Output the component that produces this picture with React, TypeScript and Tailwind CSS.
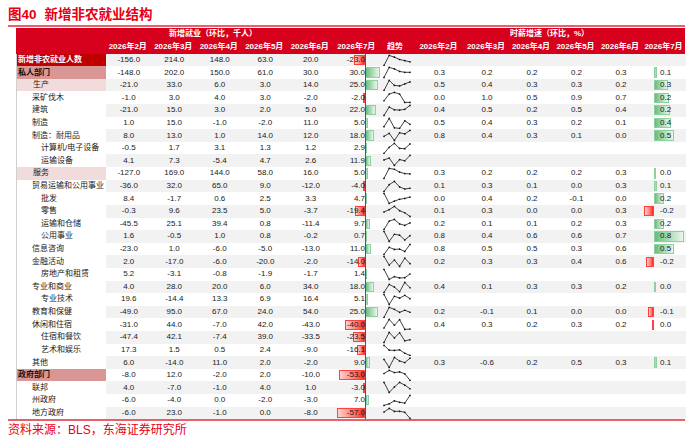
import React from "react";

type Row = {
  label: string;
  lvl: 0 | 1 | 2;
  kind?: "total" | "sector" | "sub";
  emp: number[];
  wage?: number[];
  wbar?: number;
};

const rows: Row[] = [
  { label: "新增非农就业人数", lvl: 0, kind: "total", emp: [-156, 214, 148, 63, 20, -23] },
  { label: "私人部门", lvl: 0, kind: "sector", emp: [-148, 202, 150, 61, 30, 30], wage: [0.3, 0.2, 0.2, 0.2, 0.3, 0.1], wbar: 2.5 },
  { label: "生产", lvl: 1, kind: "sub", emp: [-21, 33, 6, 3, 14, 25], wage: [0.5, 0.4, 0.3, 0.3, 0.2, 0.3], wbar: 14 },
  { label: "采矿伐木", lvl: 1, emp: [-1, 3, 4, 3, -2, -2], wage: [0.0, 1.0, 0.5, 0.9, 0.7, 0.2], wbar: 15 },
  { label: "建筑", lvl: 1, emp: [-21, 15, 3, 2, 5, 22], wage: [0.4, 0.5, 0.2, 0.5, 0.4, 0.2], wbar: 16 },
  { label: "制造", lvl: 1, emp: [1, 15, -1, -2, 11, 5], wage: [0.5, 0.4, 0.3, 0.2, 0.1, 0.4], wbar: 17 },
  { label: "制造：耐用品", lvl: 1, emp: [8, 13, 1, 14, 12, 18], wage: [0.8, 0.4, 0.3, 0.1, 0.0, 0.5], wbar: 20 },
  { label: "计算机/电子设备", lvl: 2, emp: [-0.5, 1.7, 3.1, 1.3, 1.2, 2.9] },
  { label: "运输设备", lvl: 2, emp: [4.1, 7.3, -5.4, 4.7, 2.6, 11.9] },
  { label: "服务", lvl: 1, kind: "sub", emp: [-127, 169, 144, 58, 16, 5], wage: [0.3, 0.2, 0.2, 0.2, 0.3, 0.0], wbar: 1 },
  { label: "贸易运输和公用事业", lvl: 1, emp: [-36, 32, 65, 9, -12, -4], wage: [0.1, 0.3, 0.1, 0.0, 0.3, 0.1], wbar: 3 },
  { label: "批发", lvl: 2, emp: [8.4, -1.7, 0.6, 2.5, 3.3, 4.7], wage: [0.0, 0.4, 0.2, -0.1, 0.0, 0.2], wbar: 10 },
  { label: "零售", lvl: 2, emp: [-0.3, 9.6, 23.5, 5.0, -3.7, -19.4], wage: [0.1, 0.3, 0.0, 0.0, 0.3, -0.2], wbar: -10 },
  { label: "运输和仓储", lvl: 2, emp: [-45.5, 25.1, 39.4, 0.8, -11.4, 9.7], wage: [0.2, 0.1, 0.1, 0.2, 0.3, 0.2], wbar: 10 },
  { label: "公用事业", lvl: 2, emp: [1.6, -0.5, 1.0, 0.8, -0.2, 0.7], wage: [0.8, 0.4, 0.6, 0.6, 0.7, 0.8], wbar: 30 },
  { label: "信息咨询", lvl: 1, emp: [-23, 1, -6, -5, -13, 11], wage: [0.8, 0.5, 0.5, 0.3, 0.6, 0.5], wbar: 20 },
  { label: "金融活动", lvl: 1, emp: [2, -17, -6, -20, -2, -14], wage: [0.2, 0.3, 0.3, 0.4, 0.6, -0.2], wbar: -8 },
  { label: "房地产和租赁", lvl: 2, emp: [5.2, -3.1, -0.8, -1.9, -1.7, 1.4] },
  { label: "专业和商业", lvl: 1, emp: [4, 28, 20, 6, 34, 18], wage: [0.4, 0.1, 0.3, 0.3, 0.2, 0.0], wbar: 1 },
  { label: "专业技术", lvl: 2, emp: [19.6, -14.4, 13.3, 6.9, 16.4, 5.1] },
  { label: "教育和保健", lvl: 1, emp: [-49, 95, 67, 24, 54, 25], wage: [0.2, -0.1, 0.1, 0.0, 0.0, -0.1], wbar: -6 },
  { label: "休闲和住宿", lvl: 1, emp: [-31, 44, -7, 42, -43, -40], wage: [0.4, 0.3, 0.2, 0.3, 0.2, 0.0], wbar: -2 },
  { label: "住宿和餐饮", lvl: 2, emp: [-47.4, 42.1, -7.4, 39.0, -33.5, -23.5] },
  { label: "艺术和娱乐", lvl: 2, emp: [17.3, 1.5, 0.5, 2.4, -9.0, -16.1] },
  { label: "其他", lvl: 1, emp: [6, -14, 11, 2, -2, 9], wage: [0.3, -0.6, 0.2, 0.5, 0.3, 0.1], wbar: 3 },
  { label: "政府部门", lvl: 0, kind: "sector", emp: [-8, 12, -2, 2, -10, -53] },
  { label: "联邦", lvl: 1, emp: [4, -7, -1, 4, 1, -3] },
  { label: "州政府", lvl: 1, emp: [-6, -4, 0, -2, -3, 7] },
  { label: "地方政府", lvl: 1, emp: [-6, 23, -1, 0, -8, -57] },
];

const GRID =
  "grid grid-cols-[89px_45.5px_45.5px_45.5px_45.5px_45.5px_47.5px_34px_49px_46px_44px_45px_44px_43px]";

const months = ["2026年2月", "2026年3月", "2026年4月", "2026年5月", "2026年6月", "2026年7月"];

const fmt = (v: number) => v.toFixed(1);

function Spark({ vals }: { vals: number[] }) {
  const min = Math.min(...vals);
  const max = Math.max(...vals);
  const range = max - min || 1;
  const pts = vals.map((v, i) => {
    const x = 3 + i * 5.2;
    const y = 1.4 + (1 - (v - min) / range) * 10;
    return [x, y];
  });
  return (
    <svg width="34" height="12.62" className="overflow-visible block">
      <polyline
        points={pts.map((p) => p.join(",")).join(" ")}
        fill="none"
        stroke="#111"
        strokeWidth="0.8"
        strokeLinejoin="round"
      />
      {pts.map((p, i) => (
        <circle key={i} cx={p[0]} cy={p[1]} r="0.85" fill="#111" />
      ))}
    </svg>
  );
}

function LabelCell({ r }: { r: Row }) {
  let cls = "bg-white text-[#1a1a1a]";
  if (r.kind === "total") cls = "bg-[#c00000] text-white font-bold";
  else if (r.kind === "sector") cls = "bg-[#d99694] text-[#111] font-bold";
  else if (r.kind === "sub") cls = "bg-[#f2dcdb] text-[#1a1a1a]";
  const pad = r.lvl === 0 ? "pl-[1px]" : r.lvl === 1 ? (r.kind === "sub" ? "pl-[16px]" : "pl-[15px]") : "pl-[24px]";
  return (
    <div className={`${cls} ${pad} flex items-center whitespace-nowrap overflow-hidden`}>
      {r.label}
    </div>
  );
}

export default function App() {
  return (
    <div
      className="w-[700px] h-[444px] bg-white px-[8px] overflow-hidden"
      style={{ fontFamily: '"Liberation Sans", "Noto Sans CJK SC", sans-serif' }}
    >
      {/* Title */}
      <div className="h-[25px] pt-[8px] leading-[14px] text-[13.5px] font-bold text-[#e60012] flex items-start">
        <span>图40</span>
        <span className="ml-[8px]">新增非农就业结构</span>
      </div>
      <div className="w-[677px] h-[1.5px] bg-[#e8606a]" />

      {/* Table */}
      <div className="mt-[1.5px] ml-[8px] w-[669px] text-[8px]">
        {/* Header row 1 */}
        <div className={`${GRID} h-[12.8px] bg-[#d7001d] text-white font-bold`}>
          <div />
          <div className="col-span-6 flex items-center justify-center pr-[59px] whitespace-nowrap">
            新增就业（环比，千人）
          </div>
          <div />
          <div className="col-span-6 flex items-center justify-center whitespace-nowrap">
            时薪增速（环比，%）
          </div>
        </div>
        {/* Header row 2 */}
        <div className={`${GRID} h-[12.8px] bg-[#d7001d] text-white font-bold`}>
          <div />
          {months.map((m) => (
            <div key={"e" + m} className="flex items-center justify-center whitespace-nowrap">
              {m}
            </div>
          ))}
          <div className="flex items-center justify-center pr-[4px]">趋势</div>
          {months.map((m) => (
            <div key={"w" + m} className="flex items-center justify-center whitespace-nowrap">
              {m}
            </div>
          ))}
        </div>

        {/* Body */}
        <div className="border-l border-[#cfcfcf]">
          {rows.map((r, idx) => {
            const stripe = idx % 2 === 0 ? "bg-[#f2f2f2]" : "bg-white";
            const jul = r.emp[5];
            const eLen = Math.max(1, Math.abs(jul) * 0.5);
            return (
              <div key={r.label} className={`${GRID} h-[12.62px] text-[#1a1a1a]`}>
                <LabelCell r={r} />
                {r.emp.slice(0, 5).map((v, i) => (
                  <div key={i} className={`${stripe} flex items-center justify-center`}>
                    {fmt(v)}
                  </div>
                ))}
                {/* July with data bar */}
                <div className={`${stripe} relative flex items-center justify-end pr-[16px]`}>
                  {jul < 0 ? (
                    <div
                      className="absolute top-[1.2px] bottom-[1.2px] right-[16px] bg-linear-to-r from-[#ffd0d0] to-[#ff1010] border border-[#ff4040]"
                      style={{ width: `${eLen}px` }}
                    />
                  ) : (
                    <div
                      className="absolute top-[1.2px] bottom-[1.2px] left-[31.5px] bg-linear-to-r from-[#63be7b] to-[#eaf6ee] border border-[#8fd0a0]"
                      style={{ width: `${eLen}px` }}
                    />
                  )}
                  <div className="absolute top-0 bottom-0 left-[31px] w-[0.8px] bg-[#555]" />
                  <span className="relative">{fmt(jul)}</span>
                </div>
                {/* Trend */}
                <div className={`${stripe} flex items-center`}>
                  <Spark vals={r.emp} />
                </div>
                {/* Wage */}
                {r.wage ? (
                  <>
                    {r.wage.slice(0, 5).map((v, i) => (
                      <div key={"w" + i} className={`${stripe} flex items-center justify-center`}>
                        {fmt(v)}
                      </div>
                    ))}
                    <div className={`${stripe} relative flex items-center pl-[17px]`}>
                      {(r.wbar ?? 0) < 0 ? (
                        <div
                          className="absolute top-[1.2px] bottom-[1.2px] right-[32px] bg-linear-to-r from-[#ffd0d0] to-[#ff1010] border border-[#ff4040]"
                          style={{ width: `${Math.abs(r.wbar ?? 0)}px` }}
                        />
                      ) : (
                        <div
                          className="absolute top-[1.2px] bottom-[1.2px] left-[11px] bg-linear-to-r from-[#63be7b] to-[#eaf6ee] border border-[#8fd0a0]"
                          style={{ width: `${r.wbar ?? 0}px` }}
                        />
                      )}
                      <span className="relative">{fmt(r.wage[5])}</span>
                    </div>
                  </>
                ) : (
                  <div className={`${stripe} col-span-6`} />
                )}
              </div>
            );
          })}
        </div>
      </div>

      <div className="w-[677px] h-[1.5px] bg-[#e8606a]" />
      <div className="pt-[2px] leading-[14px] text-[12px] text-[#e60012]">资料来源：BLS，东海证券研究所</div>
    </div>
  );
}
